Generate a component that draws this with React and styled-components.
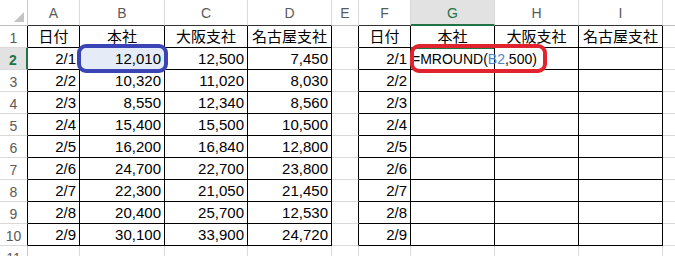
import React from 'react'
import styled, { createGlobalStyle } from 'styled-components'

const GlobalStyle = createGlobalStyle`
  html, body {
    margin: 0;
    padding: 0;
    background: #ffffff;
    overflow: hidden;
  }
  * { box-sizing: border-box; }
`

const GRID = '#d9d9d9'
const INK = '#000000'
const GREEN = '#217346'

const COLS = [
  { key: 'A', w: 52, table: true },
  { key: 'B', w: 85, table: true },
  { key: 'C', w: 83, table: true },
  { key: 'D', w: 84, table: true },
  { key: 'E', w: 27, table: false },
  { key: 'F', w: 52, table: true },
  { key: 'G', w: 84, table: true },
  { key: 'H', w: 84, table: true },
  { key: 'I', w: 84, table: true },
  { key: 'J', w: 40, table: false },
]

const HEAD = ['日付', '本社', '大阪支社', '名古屋支社']

const DATA = [
  ['2/1', '12,010', '12,500', '7,450'],
  ['2/2', '10,320', '11,020', '8,030'],
  ['2/3', '8,550', '12,340', '8,560'],
  ['2/4', '15,400', '15,500', '10,500'],
  ['2/5', '16,200', '16,840', '12,800'],
  ['2/6', '24,700', '22,700', '23,800'],
  ['2/7', '22,300', '21,050', '21,450'],
  ['2/8', '20,400', '25,700', '12,530'],
  ['2/9', '30,100', '33,900', '24,720'],
]

const Sheet = styled.div`
  display: grid;
  grid-template-columns: 28px ${COLS.map(c => `${c.w}px`).join(' ')};
  grid-template-rows: 26px repeat(11, 22px);
  width: max-content;
  height: 256px;
  font-family: "Liberation Sans", "Noto Sans CJK JP", sans-serif;
`

const Corner = styled.div`
  position: relative;
  border-right: 1px solid #c8c8c8;
  border-bottom: 1px solid #bdbdbd;
  &::after {
    content: '';
    position: absolute;
    right: 3px;
    bottom: 3px;
    width: 0;
    height: 0;
    border-left: 10px solid transparent;
    border-bottom: 10px solid #c4c4c4;
  }
`

const ColHead = styled.div`
  display: flex;
  align-items: center;
  justify-content: center;
  padding-top: 1px;
  font-size: 14px;
  color: ${p => (p.$active ? GREEN : '#5a5a5a')};
  background: ${p => (p.$active ? '#e2e2e2' : '#ffffff')};
  border-right: 1px solid ${GRID};
  border-bottom: ${p => (p.$active ? `2px solid ${GREEN}` : `1px solid ${p.$line}`)};
`

const RowHead = styled.div`
  display: flex;
  align-items: flex-end;
  justify-content: center;
  padding-bottom: 1px;
  font-size: 14px;
  color: ${p => (p.$active ? GREEN : '#5a5a5a')};
  font-weight: ${p => (p.$active ? 700 : 400)};
  background: ${p => (p.$active ? '#e2e2e2' : '#ffffff')};
  border-bottom: 1px solid ${GRID};
  border-right: ${p => (p.$active ? `2px solid ${GREEN}` : `1px solid ${p.$line}`)};
`

const Cell = styled.div`
  position: relative;
  display: flex;
  align-items: flex-end;
  justify-content: ${p => p.$align};
  padding: 0 3px 1px 3px;
  font-size: 15px;
  color: ${INK};
  white-space: nowrap;
  background: ${p => p.$bg || 'transparent'};
  border-right: 1px solid ${p => p.$right};
  border-bottom: 1px solid ${p => p.$bottom};
`

const Label = styled.span`
  font-family: "Noto Sans CJK JP", "Liberation Sans", sans-serif;
  font-size: 15px;
  line-height: 20px;
`

const Num = styled.span`
  line-height: 18px;
`

const Formula = styled.span`
  position: relative;
  z-index: 1;
  margin-left: -2px;
  font-size: 14px;
  line-height: 18px;
  overflow: visible;
`

const Ref = styled.span`
  color: #4f86c6;
`

const Ring = styled.div`
  position: absolute;
  z-index: 2;
  pointer-events: none;
  top: -4px;
  bottom: -4px;
  left: ${p => p.$left}px;
  width: ${p => p.$width}px;
  border: 4px solid ${p => p.$color};
  border-radius: 9px;
`

const ActiveEdge = styled.div`
  position: absolute;
  top: -1px;
  left: 0;
  right: 0;
  height: 2px;
  background: ${GREEN};
`

const cellText = (r, c) => {
  const col = COLS[c]
  if (!col.table) return null
  const left = c < 4
  const idx = left ? c : c - 5
  if (r === 1) return { kind: 'label', text: HEAD[idx] }
  const row = DATA[r - 2]
  if (!row) return null
  if (left) return { kind: 'num', text: row[idx] }
  if (idx === 0) return { kind: 'num', text: row[0] }
  return null
}

const App = () => {
  const cells = []
  cells.push(<Corner key="corner" />)
  COLS.forEach(col => {
    cells.push(
      <ColHead key={`h-${col.key}`} $active={col.key === 'G'} $line={col.table ? '#333333' : '#bdbdbd'}>
        {col.key === 'J' ? '' : col.key}
      </ColHead>
    )
  })

  for (let r = 1; r <= 11; r++) {
    const inTable = r <= 10
    cells.push(
      <RowHead key={`r-${r}`} $active={r === 2} $line={inTable ? INK : '#c8c8c8'}>
        {r}
      </RowHead>
    )
    COLS.forEach((col, c) => {
      const next = COLS[c + 1]
      const blackRight = inTable && (col.table || (next && next.table && col.key === 'E'))
      const blackBottom = inTable && col.table
      const content = cellText(r, c)
      const isB2 = r === 2 && col.key === 'B'
      const isG2 = r === 2 && col.key === 'G'
      cells.push(
        <Cell
          key={`${col.key}${r}`}
          $right={blackRight ? INK : GRID}
          $bottom={blackBottom ? INK : GRID}
          $align={content && content.kind === 'label' ? 'center' : isG2 ? 'flex-start' : 'flex-end'}
          $bg={isB2 ? '#e5ecf8' : null}
        >
          {content && content.kind === 'label' && <Label>{content.text}</Label>}
          {content && content.kind === 'num' && <Num>{content.text}</Num>}
          {isB2 && <Ring $color="#3b44b4" $left={-3} $width={91} />}
          {isG2 && (
            <>
              <ActiveEdge />
              <Formula>
                =MROUND(<Ref>B2</Ref>,500)
              </Formula>
              <Ring $color="#e0232e" $left={-1} $width={137} />
            </>
          )}
        </Cell>
      )
    })
  }

  return (
    <>
      <GlobalStyle />
      <Sheet>{cells}</Sheet>
    </>
  )
}

export default App
